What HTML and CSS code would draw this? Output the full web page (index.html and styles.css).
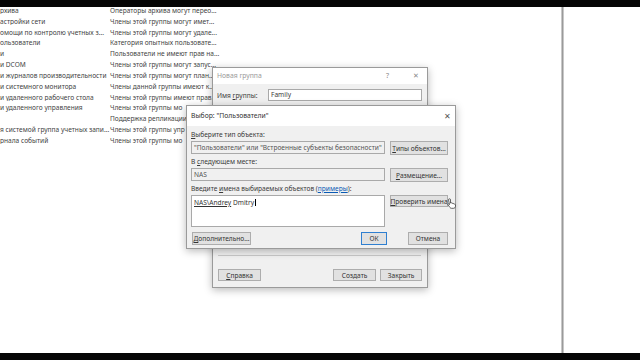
FILE: index.html
```html
<!DOCTYPE html>
<html lang="ru">
<head>
<meta charset="utf-8">
<title>Новая группа</title>
<link rel="stylesheet" href="styles.css">
</head>
<body>
<div class="screen">
  <div class="blackbar"></div>
  <div class="main">
    <div class="list">
      <div class="row"><span class="c1">рхива</span><span class="c2">Операторы архива могут перео...</span></div>
      <div class="row"><span class="c1">астройки сети</span><span class="c2">Члены этой группы могут имет...</span></div>
      <div class="row"><span class="c1">омощи по контролю учетных з...</span><span class="c2">Члены этой группы могут удале...</span></div>
      <div class="row"><span class="c1">ользователи</span><span class="c2">Категория опытных пользовате...</span></div>
      <div class="row"><span class="c1">и</span><span class="c2">Пользователи не имеют прав на...</span></div>
      <div class="row"><span class="c1">и DCOM</span><span class="c2">Члены этой группы могут запус...</span></div>
      <div class="row"><span class="c1">и журналов производительности</span><span class="c2">Члены этой группы могут план...</span></div>
      <div class="row"><span class="c1">и системного монитора</span><span class="c2">Члены данной группы имеют к...</span></div>
      <div class="row"><span class="c1">и удаленного рабочего стола</span><span class="c2">Члены этой группы имеют прав...</span></div>
      <div class="row"><span class="c1">и удаленного управления</span><span class="c2">Члены этой группы мо</span></div>
      <div class="row"><span class="c1"></span><span class="c2">Поддержка репликации</span></div>
      <div class="row"><span class="c1">я системой группа учетных запи...</span><span class="c2">Члены этой группы упр</span></div>
      <div class="row"><span class="c1">рнала событий</span><span class="c2">Члены этой группы мо</span></div>
    </div>
    <div class="divider"></div>
    <div class="pane"></div>
  </div>
  <div class="blackbar"></div>

  <div class="dlg dlg1">
    <div class="title1">
      <span class="ttext inactive">Новая группа</span>
      <span class="tbtn q">?</span>
      <span class="tbtn x">✕</span>
    </div>
    <div class="body1">
      <div class="namerow">
        <span class="lbl">Имя <u>г</u>руппы:</span>
        <div class="field white">Family</div>
      </div>
      <div class="spacer"></div>
      <div class="sep"></div>
      <div class="foot1">
        <div class="btn b-help"><u>С</u>правка</div>
        <div class="grow"></div>
        <div class="btn b-create">Создать</div>
        <div class="btn b-close">Закрыть</div>
      </div>
    </div>
  </div>

  <div class="dlg dlg2">
    <div class="title2">
      <span class="ttext">Выбор: "Пользователи"</span>
      <span class="tbtn x2">✕</span>
    </div>
    <div class="body2">
      <div class="lbl l1"><u>В</u>ыберите тип объекта:</div>
      <div class="frow">
        <div class="field grey">"Пользователи" или "Встроенные субъекты безопасности"</div>
        <div class="btn side"><u>Т</u>ипы объектов...</div>
      </div>
      <div class="lbl l2">В <u>с</u>ледующем месте:</div>
      <div class="frow">
        <div class="field grey">NAS</div>
        <div class="btn side"><u>Р</u>азмещение...</div>
      </div>
      <div class="lbl l3">Введите <u>и</u>мена выбираемых объектов (<span class="link">примеры</span>):</div>
      <div class="frow">
        <div class="field area"><u>NAS\Andrey</u> Dmitry<span class="caret"></span></div>
        <div class="btn side"><u>П</u>роверить имена</div>
      </div>
      <div class="foot2">
        <div class="btn b-more"><u>Д</u>ополнительно...</div>
        <div class="grow"></div>
        <div class="btn b-ok">ОК</div>
        <div class="btn b-cancel">Отмена</div>
      </div>
    </div>
  </div>

  <svg class="cursor" width="10" height="11" viewBox="0 0 10 11">
    <path d="M2.5 0.8 C3.2 0.8 3.5 1.2 3.5 1.8 L3.5 5 L4.2 4.8 C4.8 4.7 5.1 5 5.2 5.3 C5.6 5.1 6.2 5.2 6.3 5.7 C6.7 5.5 7.3 5.6 7.4 6.1 C7.9 6 8.5 6.3 8.5 7 L8.5 8.2 C8.5 9.4 7.6 10.3 6.4 10.3 L4.6 10.3 C3.9 10.3 3.3 10 2.9 9.4 L0.9 6.8 C0.6 6.3 1 5.7 1.6 5.9 L2.5 6.6 L1.5 1.8 C1.5 1.2 1.9 0.8 2.5 0.8 Z" fill="#fff" stroke="#222" stroke-width="0.7"/>
  </svg>
</div>
</body>
</html>
```

FILE: styles.css
```css
* { box-sizing: border-box; }
html, body { margin: 0; padding: 0; }
body {
  width: 640px;
  height: 360px;
  overflow: hidden;
  background: #fff;
  font-family: "Noto Sans", "Open Sans", sans-serif;
  font-size: 6.6px;
  color: #3a3a3a;
}
u { text-decoration: underline; text-underline-offset: 1px; text-decoration-thickness: 0.5px; }
.screen {
  position: relative;
  width: 640px;
  height: 360px;
  display: flex;
  flex-direction: column;
}
.blackbar { height: 7px; background: #050505; flex: none; }
.main { flex: 1; display: flex; overflow: hidden; }
.list {
  width: 561px;
  flex: none;
}
.row { height: 10.83px; line-height: 7.4px; display: flex; align-items: flex-start; white-space: nowrap; color: #444; }
.c1 { width: 110px; flex: none; overflow: hidden; }
.c2 { flex: none; }
.divider {
  width: 3px;
  flex: none;
  background: #9a9a9a;
  border-left: 1px solid #c8c8c8;
  border-right: 1px solid #c8c8c8;
}
.pane { flex: 1; background: #fff; }

.dlg {
  position: absolute;
  border: 1px solid #9a9a9a;
  box-shadow: 0 2px 8px rgba(0,0,0,0.28);
  display: flex;
  flex-direction: column;
  background: #f0f0f0;
}
.ttext { color: #333; font-size: 6.8px; }
.inactive { color: #9a9a9a; }
.tbtn { position: absolute; color: #555; font-size: 7px; }

/* dialog 1 */
.dlg1 { left: 212px; top: 67px; width: 216px; height: 221px; }
.title1 { height: 16px; background: #fff; position: relative; padding-left: 4px; line-height: 16px; flex: none; }
.q { left: 173px; top: 0; color: #888; }
.x { left: 200px; top: 0; color: #888; }
.body1 { flex: 1; display: flex; flex-direction: column; padding: 0 5px 6px 4px; }
.namerow { display: flex; align-items: center; margin-top: 5px; height: 12px; }
.namerow .lbl { width: 51px; flex: none; }
.field {
  border: 1px solid #a9a9a9;
  padding-left: 2px;
  white-space: nowrap;
  overflow: hidden;
}
.namerow .field { flex: 1; height: 12px; line-height: 10px; }
.white { background: #fff; }
.grey { background: #f0f0f0; color: #555; }
.spacer { flex: 1; }
.sep { height: 1px; background: #c8c8c8; margin: 0 1px 13px 1px; flex: none; }
.foot1 { display: flex; gap: 4px; height: 12px; flex: none; padding-left: 1px; }
.grow { flex: 1; }
.btn {
  background: #e1e1e1;
  border: 1px solid #adadad;
  display: flex;
  align-items: center;
  justify-content: center;
  white-space: nowrap;
  color: #333;
  flex: none;
}
.b-help { width: 43px; }
.b-create { width: 43px; }
.b-close { width: 42px; }

/* dialog 2 */
.dlg2 { left: 186px; top: 105px; width: 270px; height: 144px; }
.title2 { height: 20px; background: #fff; position: relative; padding-left: 4px; line-height: 20px; flex: none; }
.x2 { left: 257px; top: 0; font-size: 8px; }
.body2 { flex: 1; display: flex; flex-direction: column; padding: 0 7px 0 4px; }
.l1 { margin-top: 4px; height: 10px; line-height: 10px; }
.l2, .l3 { margin-top: 2px; height: 10px; line-height: 10px; }
.lbl { white-space: nowrap; }
.link { color: #0a5ab4; text-decoration: underline; }
.frow { display: flex; gap: 5px; align-items: flex-start; margin-top: 1px; }
.frow .field { width: 194px; height: 13px; line-height: 11px; flex: none; }
.frow .side { width: 58px; height: 14px; }
.frow .area { height: 32px; background: #fff; color: #333; line-height: 11px; padding-top: 1px; }
.caret { display: inline-block; width: 0.6px; height: 7px; background: #000; vertical-align: -1px; margin-left: 0.5px; }
.frow .area + .side { height: 12px; }
.foot2 { display: flex; height: 13px; margin-top: 5px; padding-left: 1px; }
.b-more { width: 59px; }
.b-ok { width: 26px; border-color: #2f7fd0; margin-right: 21px; }
.b-cancel { width: 40px; }

.cursor { position: absolute; left: 447px; top: 198px; }
```
